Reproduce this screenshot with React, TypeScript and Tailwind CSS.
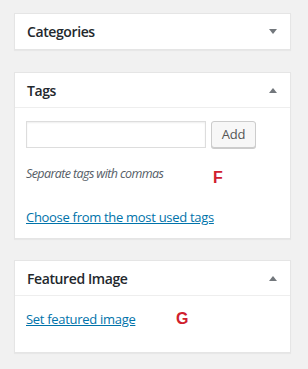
import React from "react";

function Arrow({ up }: { up?: boolean }) {
  return (
    <svg width="8" height="5" viewBox="0 0 8 5" className="block">
      {up ? <polygon points="0,5 8,5 4,0" fill="#72777c" /> : <polygon points="0,0 8,0 4,5" fill="#72777c" />}
    </svg>
  );
}

function Header({ title, up, border }: { title: string; up?: boolean; border?: boolean }) {
  return (
    <div className={`flex h-[35px] items-center justify-between pl-[12px] pr-[13px] ${border ? "border-b border-[#eeeeee]" : ""}`}>
      <span className="text-[14px] font-semibold tracking-[-0.4px] text-[#23282d]">{title}</span>
      <Arrow up={up} />
    </div>
  );
}

export default function App() {
  return (
    <div
      className="min-h-[369px] w-[308px] bg-[#f1f1f1] pl-[14px] pt-[13px]"
      style={{ fontFamily: '"Open Sans", "Noto Sans", sans-serif' }}
    >
      <div className="w-[277px] border border-[#e5e5e5] bg-white shadow-[0_1px_1px_rgba(0,0,0,0.04)]">
        <Header title="Categories" />
      </div>

      <div className="relative mt-[22px] w-[277px] border border-[#e5e5e5] bg-white shadow-[0_1px_1px_rgba(0,0,0,0.04)]">
        <Header title="Tags" up border />
        <div className="px-[11px] pb-[11px] pt-[13px]">
          <div className="flex items-center gap-[5px]">
            <div className="h-[27px] w-[180px] border border-[#dddddd] bg-white shadow-[inset_0_1px_2px_rgba(0,0,0,0.07)]" />
            <div className="flex h-[27px] w-[45px] items-center justify-center rounded-[3px] border border-[#cccccc] bg-[#f7f7f7] text-[13px] tracking-[-0.2px] text-[#555555] shadow-[0_1px_0_#cccccc]">
              Add
            </div>
          </div>
          <p className="mt-[16px] text-[12.5px] italic tracking-[-0.6px] leading-[19px] text-[#555d66]">Separate tags with commas</p>
          <p className="mt-[25px] text-[13px] tracking-[-0.3px] leading-[19px] text-[#0073aa] underline">Choose from the most used tags</p>
        </div>
        <span
          className="absolute left-[198px] top-[97px] text-[16px] font-bold leading-none text-[#d0202e]"
          style={{ fontFamily: '"Liberation Sans", Arial, sans-serif' }}
        >
          F
        </span>
      </div>

      <div className="relative mt-[21px] w-[277px] border border-[#e5e5e5] bg-white shadow-[0_1px_1px_rgba(0,0,0,0.04)]">
        <Header title="Featured Image" up border />
        <div className="px-[11px] pb-[23px] pt-[14px]">
          <p className="text-[13px] tracking-[-0.3px] leading-[19px] text-[#0073aa] underline">Set featured image</p>
        </div>
        <span
          className="absolute left-[161px] top-[50px] text-[16px] font-bold leading-none text-[#d0202e]"
          style={{ fontFamily: '"Liberation Sans", Arial, sans-serif' }}
        >
          G
        </span>
      </div>
    </div>
  );
}
